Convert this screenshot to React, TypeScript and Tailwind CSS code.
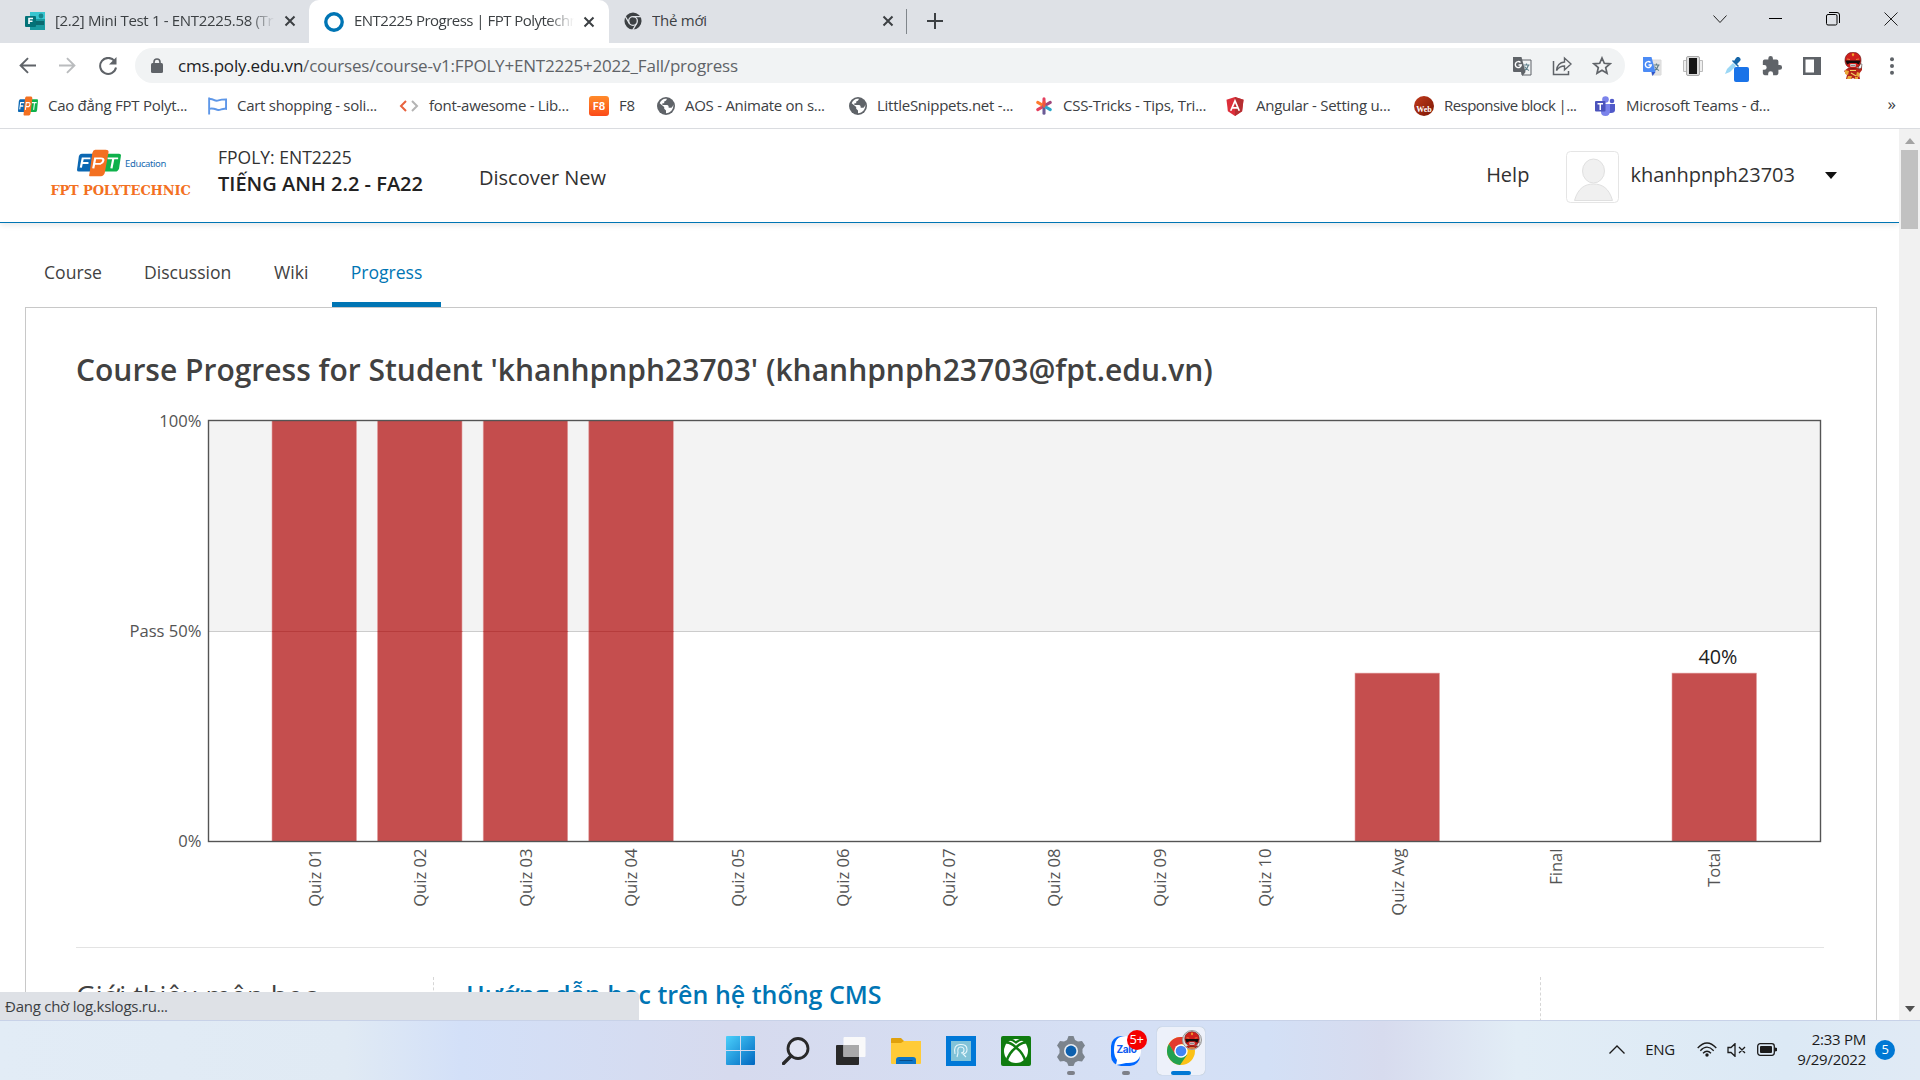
import React from "react";

type IconProps = { className?: string };

const Close = ({ className = "" }: IconProps) => (
  <svg viewBox="0 0 12 12" className={`h-3 w-3 shrink-0 ${className}`}><path d="M1.5 1.5l9 9M10.5 1.5l-9 9" stroke="#3c4043" strokeWidth="2" fill="none" /></svg>
);

const FormsIcon = () => (
  <svg viewBox="0 0 20 20" className="h-5 w-5 shrink-0">
    <rect x="5" y="1" width="15" height="10" fill="#37c6d0" /><circle cx="16" cy="5" r="2.4" fill="#17858c" />
    <rect x="5" y="8" width="15" height="11" fill="#1a9ba1" /><rect x="11" y="10" width="8" height="4" fill="#0b6a70" />
    <rect x="0" y="5" width="11" height="11" rx="1" fill="#037278" />
    <path d="M4 13V7.500h4M4 10.300h3.500" stroke="#fff" strokeWidth="1.600" fill="none" />
  </svg>
);

const ChromeMono = () => (
  <svg viewBox="0 0 20 20" className="h-[18px] w-[18px] shrink-0">
    <circle cx="10" cy="10" r="9.500" fill="#3c4043" />
    <circle cx="10" cy="10" r="4.800" fill="none" stroke="#dee1e6" strokeWidth="1.500" />
    <path d="M10 5.200h9M5.800 12.500L1.300 4.700M14.200 12.500L9.700 20" stroke="#dee1e6" strokeWidth="1.500" />
  </svg>
);

const Globe = () => (
  <svg viewBox="0 0 20 20" className="h-[18px] w-[18px] shrink-0">
    <circle cx="10" cy="10" r="10" fill="#5f6368" />
    <path d="M4 5c2-3 5-3 7-3-.5 2-1 2-3 3v2H6v2h5c2 0 2 2 2 3h3c1.500-1 2-3 2-4 1 5-3 10-8 10v-3l-2-2v-2l-5-4z" fill="#fff" />
  </svg>
);

const FptMark = ({ className = "" }: IconProps) => (
  <svg viewBox="0 0 46 36" preserveAspectRatio="none" className={`shrink-0 ${className}`}>
    <path d="M5 6h13l-3 23H2q-2 0-2-2L2 9q1-3 3-3z" fill="#0b67b2" />
    <path d="M31 6h13q2 0 2 2l-2 17q-1 4-4 4H28z" fill="#0eb14b" />
    <path d="M19 1h11q3 0 3 3l-4 27q-1 4-4 4H14q-2 0-1-3l3-27q1-4 3-4z" fill="#f37021" />
    <g fill="none" stroke="#fff" strokeWidth="2.300"><path d="M4 24l2-12h8M5 18h7" /><path d="M17 25l2-13h6q3 0 2.500 3t-3 4H18" /><path d="M32 12h11M38 12l-2 13" /></g>
  </svg>
);

const Translate = ({ color }: { color: boolean }) => (
  <svg viewBox="0 0 20 20" className="h-5 w-5 shrink-0">
    <path d="M8 4h11v15H10z" fill={color ? "#e3e3e3" : "#f1f3f4"} stroke={color ? "#dadada" : "#5f6368"} />
    <path d="M11.500 9h6M14.500 7.500V9M16.500 9q-1 4-4.500 6M12.500 10.500q2 3 4.500 4" stroke="#5f7f8a" strokeWidth="1.200" fill="none" />
    <path d="M1 1h8.500l4 15H2q-1 0-1-1z" fill={color ? "#4c8bf5" : "#5f6368"} /><path d="M9.500 16h4l-3 4z" fill={color ? "#3156c9" : "#5f6368"} />
    <path d="M8.500 6.500a3 3 0 1 0 .8 2.500H6.500" stroke="#fff" strokeWidth="1.400" fill="none" />
  </svg>
);

const Ranger = ({ className = "" }: IconProps) => (
  <svg viewBox="0 0 20 28" className={`shrink-0 ${className}`}>
    <path d="M5 16h10l4-3v5l-3 4 1 5h-5l-2-1-2 1H3l1-4-3-4z" fill="#b5241a" />
    <path d="M2 18l4 1-1 4-3-1zM14 20l3 1-1 4-3-1zM5 24h4l-1 3H4zM12 25h3v2h-3z" fill="#e9a93a" />
    <path d="M16 11.500l3 .5-.5 4-3 1z" fill="#f5f5f5" stroke="#333" strokeWidth=".5" />
    <path d="M10 .3c5 0 8 3.200 8 8S15 16.500 10 16.500 2 13 2 8.300 5 .3 10 .3z" fill="#d01f1c" stroke="#5a100d" strokeWidth=".6" />
    <path d="M10 .8l1.300 2L10 4.500 8.700 2.800z" fill="#f6a92e" />
    <path d="M2.500 8.500h15l-1.500 4-3-1.500H7L4 12.500z" fill="#120c0c" />
    <path d="M4 7l3 .5M16 7l-3 .5" stroke="#f09a45" strokeWidth=".8" />
    <rect x="7" y="12" width="6" height="2.800" rx="1" fill="#ddd" /><path d="M7.500 13.400h5" stroke="#555" strokeWidth=".7" />
    <path d="M7 18.500h6M8 21l5 3" stroke="#f3cf63" strokeWidth="1.200" />
  </svg>
);

const Tab = ({ icon, title, className, fade }: { icon: React.ReactNode; title: string; className: string; fade: string }) => (
  <div className={`flex h-[42px] items-center ${className}`}>
    {icon}
    <span className={`ml-[10px] flex-1 overflow-hidden whitespace-nowrap pb-[2px] text-[15px] ${fade}`}>{title}</span>
    <Close className="ml-[9px]" />
  </div>
);

const TabStrip = () => (
  <div className="flex h-[43px] bg-[#dee1e6]">
    <Tab className="w-[309px] pl-[25px] pr-[13px]" icon={<FormsIcon />} title="[2.2] Mini Test 1 - ENT2225.58 (Tr" fade="tracking-[-0.32px] [mask-image:linear-gradient(to_right,black_88%,transparent)]" />
    <Tab className="h-[43px] w-[300px] rounded-t-[10px] bg-white pl-[15px] pr-[14px]" icon={<svg viewBox="0 0 20 20" className="h-5 w-5 shrink-0"><circle cx="10" cy="10" r="8.200" fill="none" stroke="#0075b4" strokeWidth="3.400" /></svg>} title="ENT2225 Progress | FPT Polytechn" fade="tracking-[-0.52px] [mask-image:linear-gradient(to_right,black_88%,transparent)]" />
    <Tab className="w-[297px] pl-[15px] pr-[12px]" icon={<ChromeMono />} title="Thẻ mới" fade="tracking-[-0.25px]" />
    <div className="mt-[9px] h-[25px] w-px bg-[#80868b]" />
    <svg viewBox="0 0 16 16" className="ml-[20px] mt-[13px] h-4 w-4"><path d="M8 0v16M0 8h16" stroke="#3c4043" strokeWidth="2" /></svg>
    <div className="ml-auto flex h-[37px] items-center text-black">
      <svg viewBox="0 0 14 10" className="mr-[42px] h-[10px] w-[14px]"><path d="M.5 1.500l6.500 7 6.500-7" fill="none" stroke="#222" /></svg>
      <div className="mr-[44px] h-px w-[13px] bg-black" />
      <svg viewBox="0 0 14 14" className="mr-[44px] h-[14px] w-[14px]"><rect x=".5" y="2.500" width="10.500" height="10.500" rx="1.500" fill="none" stroke="#000" /><path d="M3 .5h8q2.500 0 2.500 2.500v8" fill="none" stroke="#000" /></svg>
      <svg viewBox="0 0 14 14" className="mr-[22px] h-[14px] w-[14px]"><path d="M.5.5l13 13M13.500.5l-13 13" stroke="#222" /></svg>
    </div>
  </div>
);

const Toolbar = () => (
  <div className="flex h-[45px] items-center pl-[19px] pr-[26px]">
    <svg viewBox="0 0 16 16" className="h-[17px] w-[17px]"><path d="M16 8H1.500M8.500 1L1.500 8l7 7" fill="none" stroke="#5f6368" strokeWidth="1.800" /></svg>
    <svg viewBox="0 0 16 16" className="ml-[23px] h-[17px] w-[17px]"><path d="M0 8h14.500M7.500 1l7 7-7 7" fill="none" stroke="#babcbe" strokeWidth="1.800" /></svg>
    <svg viewBox="0 0 18 18" className="ml-[23px] h-[18px] w-[18px]"><path d="M15.500 4A8 8 0 1 0 17 10.500" fill="none" stroke="#5f6368" strokeWidth="2" /><path d="M17.500 0v7.500H10z" fill="#5f6368" /></svg>
    <div className="ml-[18px] flex h-[35px] w-[1490px] items-center rounded-full bg-[#f1f3f4] pl-[16px] pr-[13px]">
      <svg viewBox="0 0 12 15" className="h-[15px] w-[12px]"><rect y="5" width="12" height="10" rx="1.500" fill="#5f6368" /><path d="M3 6V4a3 3 0 0 1 6 0v2" fill="none" stroke="#5f6368" strokeWidth="1.600" /></svg>
      <span className="ml-[15px] whitespace-nowrap text-[17px] tracking-[-0.2px] text-[#5f6368]"><span className="text-[#202124]">cms.poly.edu.vn</span>/courses/course-v1:FPOLY+ENT2225+2022_Fall/progress</span>
      <div className="ml-auto flex items-center gap-[20px]">
        <Translate color={false} />
        <svg viewBox="0 0 20 20" className="h-5 w-5"><path d="M1.500 5v13.500h15V15" fill="none" stroke="#5f6368" strokeWidth="1.500" /><path d="M4.500 14.500c.5-5 3-8 8-8.500V2l6.500 6-6.500 6v-4c-4 0-6 1.500-8 4.500z" fill="none" stroke="#5f6368" strokeWidth="1.400" /></svg>
        <svg viewBox="0 0 20 20" className="h-5 w-5"><path d="M10 2l2.300 5.300 5.700.5-4.300 3.800 1.300 5.600-5-3-5 3 1.300-5.600L2 7.800l5.700-.5z" fill="none" stroke="#5f6368" strokeWidth="1.700" /></svg>
      </div>
    </div>
    <div className="ml-auto flex items-center">
      <Translate color />
      <svg viewBox="0 0 20 20" className="ml-[21px] h-5 w-5"><path d="M.5 4.500h4v11h-4zM15.500 4.500h4v11h-4z" fill="#eee" stroke="#bbb" /><rect x="3.500" y=".5" width="13" height="19" rx="1.500" fill="#ddd" stroke="#aaa" /><rect x="6" y="2" width="8" height="16" fill="#161616" /></svg>
      <svg viewBox="0 0 26 26" className="ml-[21px] mt-[9px] h-[26px] w-[26px]"><path d="M1 17l2-5 6-6 3 3-6 6z" fill="#9bd7f5" /><path d="M8 4l6 6 1-1-2-2 3-3q1.500-2-.5-3.500t-3.500.5l-2 3-1-1z" fill="#1565a8" /><rect x="10" y="10" width="15" height="15" rx="2" fill="#1a73e8" /></svg>
      <svg viewBox="0 0 24 24" className="ml-[11px] h-[22px] w-[22px]"><path d="M20.500 11H19V7a2 2 0 0 0-2-2h-4V3.500a2.500 2.500 0 0 0-5 0V5H4a2 2 0 0 0-2 2v3.800h1.500a2.700 2.700 0 0 1 0 5.400H2V20a2 2 0 0 0 2 2h3.800v-1.500a2.700 2.700 0 0 1 5.400 0V22H17a2 2 0 0 0 2-2v-4h1.500a2.500 2.500 0 0 0 0-5z" fill="#5f6368" /></svg>
      <svg viewBox="0 0 18 18" className="ml-[20px] h-[18px] w-[18px]"><path fillRule="evenodd" d="M0 0h18v18H0zM2.500 2.500v13H11v-13z" fill="#5f6368" /></svg>
      <Ranger className="ml-[22px] h-[28px] w-[20px]" />
      <svg viewBox="0 0 4 18" className="ml-[27px] h-[18px] w-[4px]"><g fill="#5f6368"><circle cx="2" cy="2.200" r="2" /><circle cx="2" cy="9" r="2" /><circle cx="2" cy="15.800" r="2" /></g></svg>
    </div>
  </div>
);

const Mark = ({ icon, label, className }: { icon: React.ReactNode; label: string; className: string }) => (
  <div className={`flex shrink-0 items-center gap-[10px] whitespace-nowrap text-[15px] tracking-[-0.27px] text-[#3c4043] ${className}`}>
    {icon}<span className="pb-[2px]">{label}</span>
  </div>
);

const Bookmarks = () => (
  <div className="flex h-[41px] items-center border-b border-[#dadce0] pb-[4px] pl-[18px]">
    <Mark className="w-[190px]" icon={<FptMark className="h-[20px] w-[20px]" />} label="Cao đẳng FPT Polyt..." />
    <Mark className="w-[191px]" icon={<svg viewBox="0 0 20 18" className="h-[18px] w-[19px]"><path d="M1.200 0v18M1 2c4-2 6 3 10 1 3-1 5-1 8-1v10c-4-1-6 2-9 1s-5-2-9-1" fill="none" stroke="#5e97e8" strokeWidth="2" /></svg>} label="Cart shopping - soli..." />
    <Mark className="w-[190px]" icon={<svg viewBox="0 0 20 12" className="h-[12px] w-[20px]"><path d="M7 1L2 6l5 5" fill="none" stroke="#e8623d" strokeWidth="2" /><path d="M13 1l5 5-5 5" fill="none" stroke="#b4b4b4" strokeWidth="2" /></svg>} label="font-awesome - Lib..." />
    <Mark className="w-[68px]" icon={<div className="flex h-5 w-5 items-center justify-center rounded-[3px] bg-linear-to-b from-[#ff8a2a] to-[#fb4818] font-['Inter'] text-[10px] font-bold text-white">F8</div>} label="F8" />
    <Mark className="w-[192px] tracking-[-0.2px]" icon={<Globe />} label="AOS - Animate on s..." />
    <Mark className="w-[186px]" icon={<Globe />} label="LittleSnippets.net -..." />
    <Mark className="w-[191px]" icon={<svg viewBox="0 0 20 20" className="h-[18px] w-[18px]"><g strokeWidth="3.400" strokeLinecap="round"><path d="M10 10V2M10 10L3 14" stroke="#e4405f" /><path d="M10 10L3 6" stroke="#ff7a2d" /><path d="M10 10l7-4" stroke="#a1477b" /><path d="M10 10v8" stroke="#6b5b95" /><path d="M10 10l7 4" stroke="#2aa7c9" /><path d="M10 10V6" stroke="#f2543d" /></g></svg>} label="CSS-Tricks - Tips, Tri..." />
    <Mark className="w-[188px]" icon={<svg viewBox="0 0 18 20" className="mr-[2px] h-[19px] w-[18px]"><path d="M9 0l9 3-1.500 12L9 20l-7.500-5L0 3z" fill="#dd2e3a" /><path d="M9 0l9 3-1.500 12L9 20z" fill="#b52e31" /><path d="M4.500 14.500L9 4l4.500 10.500M6 11.500h6" stroke="#fff" strokeWidth="1.800" fill="none" /></svg>} label="Angular - Setting u..." />
    <Mark className="w-[181px] tracking-[-0.55px]" icon={<div className="flex h-5 w-5 items-center justify-center overflow-hidden rounded-full bg-linear-to-br from-[#c23a1b] to-[#7b1606] pt-2 font-['Liberation_Serif'] text-[8px] font-bold tracking-normal text-white">Web</div>} label="Responsive block |..." />
    <Mark className="" icon={<svg viewBox="0 0 20 20" className="mr-px h-5 w-5"><circle cx="10.500" cy="3.500" r="3.300" fill="#7b83eb" /><circle cx="17" cy="5" r="2.300" fill="#5059c9" /><path d="M13 8h7v6q0 3-4 3h-3z" fill="#5059c9" /><path d="M6 8h9v7q0 5-4.500 5T6 16z" fill="#7b83eb" /><rect y="5" width="10.500" height="10.500" rx="1" fill="#4b53bc" /><path d="M2.500 7.800H8M5.250 8v6" stroke="#fff" strokeWidth="1.500" /></svg>} label="Microsoft Teams - đ..." />
    <span className="ml-auto mr-[24px] pb-[5px] text-[17px] text-[#3c4043]">»</span>
  </div>
);

const SiteHeader = () => (
  <div className="flex h-[94px] items-start border-b border-[#0075b4] pl-[50px] pr-[62px] text-[#313131] shadow-[0_2px_6px_rgba(0,0,0,0.1)]">
    <div className="flex w-[141px] flex-col items-center pt-[20px]">
      <div className="flex items-center pl-[2px]">
        <FptMark className="h-[28px] w-[44px]" />
        <span className="ml-[4px] mt-[2px] font-['Noto_Sans'] text-[9.5px] tracking-[-0.4px] text-[#1a6bb0]">Education</span>
      </div>
      <span className="mt-[6px] whitespace-nowrap font-['DejaVu_Serif','Liberation_Serif'] text-[13px] font-bold leading-4 tracking-[-0.15px] text-[#f37021]">FPT POLYTECHNIC</span>
    </div>
    <div className="ml-[27px] pt-[15px]">
      <div className="text-[17.5px] leading-[26px]">FPOLY: ENT2225</div>
      <div className="whitespace-nowrap text-[20px] font-semibold leading-[27px] text-[#222]">TIẾNG ANH 2.2 - FA22</div>
    </div>
    <div className="ml-[56px] pt-[34px] text-[20px] leading-[30px]">Discover New</div>
    <div className="ml-auto flex items-start text-[20px] leading-[30px]">
      <span className="pt-[31px]">Help</span>
      <svg viewBox="0 0 53 52" className="ml-[37px] mt-[22px] h-[52px] w-[53px]"><rect x=".5" y=".5" width="52" height="51" rx="4" fill="#fff" stroke="#e5e5e5" /><ellipse cx="27.500" cy="20" rx="11" ry="12" fill="#f0f0f0" stroke="#e0e0e0" /><path d="M8.500 49.500C12 37 19 33 27.500 33S43 37 46.500 49.500z" fill="#f0f0f0" stroke="#e0e0e0" /></svg>
      <span className="ml-[11px] pt-[31px]">khanhpnph23703</span>
      <svg viewBox="0 0 12 7" className="ml-[30px] mt-[43px] h-[7px] w-[12px]"><path d="M0 0h12L6 7z" fill="#111" /></svg>
    </div>
  </div>
);

const NavTabs = () => (
  <div className="flex h-[84px] items-end pl-[25px] text-[17.6px] leading-[27px] text-[#414141]">
    <div className="h-[48px] w-[96px] pl-[19px]">Course</div>
    <div className="h-[48px] w-[129px] pl-[23px]">Discussion</div>
    <div className="h-[48px] w-[82px] pl-[24px]">Wiki</div>
    <div className="h-[48px] w-[109px] border-b-5 border-[#0075b4] text-center text-[#0075b4]">Progress</div>
  </div>
);

const labels: [string, number, number, number][] = [
  ["Quiz 01", 315, 272, 100], ["Quiz 02", 420.500, 377.500, 100], ["Quiz 03", 526, 483.200, 100], ["Quiz 04", 631.500, 588.800, 100],
  ["Quiz 05", 738, 0, 0], ["Quiz 06", 843, 0, 0], ["Quiz 07", 949, 0, 0], ["Quiz 08", 1054, 0, 0], ["Quiz 09", 1160, 0, 0], ["Quiz 10", 1265.500, 0, 0],
  ["Quiz Avg", 1398, 1355, 40], ["Final", 1556, 0, 0], ["Total", 1714, 1672, 40],
];

const Chart = () => (
  <svg viewBox="76 404 1748 544" className="h-[544px] w-[1748px] font-['Open_Sans']">
    <rect x="208.500" y="420.500" width="1612" height="211" fill="#f3f3f3" />
    <path d="M208.500 631.500h1612" stroke="#ccc" />
    {labels.filter((l) => l[3] > 0).map(([name, , x, value]) => (
      <rect key={name} x={x} y={841.5 - value * 4.21} width="84.500" height={value * 4.21} fill="#bd3536" fillOpacity=".88" stroke="#e3a1a1" strokeWidth=".6" />
    ))}
    <path d="M272 631.500h85M377.500 631.500h85M483.200 631.500h85M588.800 631.500h85" stroke="#b03636" strokeOpacity=".6" />
    <rect x="208.500" y="420.500" width="1612" height="421" fill="none" stroke="#545454" strokeWidth="1.400" />
    <g fontSize="16.6" fill="#545454" textAnchor="end"><text x="201.500" y="427">100%</text><text x="201.500" y="637">Pass 50%</text><text x="201.500" y="847">0%</text></g>
    <text x="1718" y="663.500" fontSize="19.800" fill="#222" textAnchor="middle">40%</text>
    <g fontSize="16.6" fill="#545454" textAnchor="end">
      {labels.map(([name, x]) => <text key={name} transform={`translate(${x + 5.5} 848.5) rotate(-90)`}>{name}</text>)}
    </g>
  </svg>
);

const CoursePage = () => (
  <div className="flex h-[891px]">
    <div className="w-[1899px] overflow-hidden bg-white">
      <SiteHeader />
      <NavTabs />
      <div className="ml-[25px] h-[730px] w-[1852px] border border-[#c8c8c8] pl-[50px]">
        <h1 className="h-[96px] whitespace-nowrap pt-[38px] text-[30px] font-semibold leading-[48px] text-[#414141]">Course Progress for Student 'khanhpnph23703' (khanhpnph23703@fpt.edu.vn)</h1>
        <Chart />
        <div className="-mt-px flex h-[76px] w-[1748px] items-start border-t border-[#e3e3e3] pt-[29px]">
          <h2 className="h-[60px] w-[358px] whitespace-nowrap border-r border-dashed border-[#d6d6d6] text-[27.2px] leading-[38px] text-[#414141]">Giới thiệu môn học</h2>
          <div className="h-[60px] w-[1107px] border-r border-dashed border-[#d6d6d6] pl-[32px] text-[25px] font-semibold leading-[35px] text-[#0075b4]">Hướng dẫn học trên hệ thống CMS</div>
        </div>
      </div>
    </div>
    <div className="flex w-[21px] flex-col items-center bg-[#f1f1f1] pb-[8px] pt-[9px]">
      <svg viewBox="0 0 10 6" className="h-[6px] w-[10px]"><path d="M0 6h10L5 0z" fill="#a3a3a3" /></svg>
      <div className="mt-[6px] h-[79px] w-[17px] bg-[#c1c1c1]" />
      <svg viewBox="0 0 10 6" className="mt-auto h-[6px] w-[10px]"><path d="M0 0h10L5 6z" fill="#505050" /></svg>
    </div>
  </div>
);

const TaskbarApp = ({ children, dot = false }: { children: React.ReactNode; dot?: boolean }) => (
  <div className="relative flex h-12 w-[55px] items-center justify-center">
    {children}
    {dot && <div className="absolute bottom-0 left-[24px] h-[4px] w-[8px] rounded-full bg-[#7d8088]" />}
  </div>
);

const Taskbar = () => (
  <div className="flex h-[60px] items-center border-t border-[#c8d2e8] bg-[linear-gradient(90deg,#e2ecf6_0%,#e0eaf4_18%,#d3e0f8_24%,#d6daee_38%,#d5e0f5_60%,#d3e0f6_66%,#d7dbee_72%,#e2edf6_79%,#dce9f5_93%,#e0eaf5_100%)]">
    <div className="ml-[713px] flex">
      <TaskbarApp><svg viewBox="0 0 30 30" className="h-[29px] w-[29px]"><defs><linearGradient id="win" x2="1" y2="1"><stop stopColor="#4bd0fb" /><stop offset="1" stopColor="#0067c0" /></linearGradient></defs><path d="M0 1q0-1 1-1h13.500v14.500H0zM15.500 0H29q1 0 1 1v13.500H15.500zM0 15.500h14.500V30H1q-1 0-1-1zM15.500 15.500H30V29q0 1-1 1H15.500z" fill="url(#win)" /></svg></TaskbarApp>
      <TaskbarApp><svg viewBox="0 0 28 28" className="h-[28px] w-[28px]"><circle cx="16" cy="11.500" r="10" fill="#e8eaf3" fillOpacity=".6" stroke="#292929" strokeWidth="2.800" /><path d="M9 19l-7.500 7.500" stroke="#292929" strokeWidth="3.400" strokeLinecap="round" /></svg></TaskbarApp>
      <TaskbarApp><svg viewBox="0 0 30 28" className="h-[28px] w-[30px]"><rect y="8" width="23" height="20" rx="1" fill="#292929" /><rect x="7.500" y="0" width="22" height="20" rx="1" fill="#f9f9fa" /><path d="M7.500 8H23v12H7.500z" fill="#a9a9aa" /></svg></TaskbarApp>
      <TaskbarApp><svg viewBox="0 0 30 26" className="h-[26px] w-[30px]"><path d="M0 1q0-1 1-1h9l3 3h16q1 0 1 1v6H0z" fill="#e0a10d" /><path d="M0 5h10l3-2h17v22q0 1-1 1H1q-1 0-1-1z" fill="#ffcb38" /><path d="M5 26v-4q0-3 3-3h14q3 0 3 3v4z" fill="#0c75c7" /><path d="M8.500 22.500h13" stroke="#094b84" /></svg></TaskbarApp>
      <TaskbarApp><svg viewBox="0 0 30 30" className="h-[30px] w-[30px]"><path d="M0 0h30v30H0z" fill="#0078d7" /><path d="M5 5h20v20H5z" fill="#82c3d8" /><path d="M9 18q-2-9 5-9.500t7 5q0 4-4 4.500l3 3M12 17q-1-6 2.500-6t3.500 3-3 3M12 17l-1 4" fill="none" stroke="#e6f6fb" strokeWidth="1.100" /></svg></TaskbarApp>
      <TaskbarApp><svg viewBox="0 0 30 30" className="h-[30px] w-[30px]"><rect width="30" height="30" rx="2" fill="#107c10" /><circle cx="15" cy="15" r="12" fill="#fff" /><path d="M8.500 3.500q3 0 6.500 3 3.500-3 6.500-3" fill="none" stroke="#107c10" strokeWidth="2.200" /><path d="M5.500 6.500C9 6.500 12.500 9 15 11.500 17.500 9 21 6.500 24.500 6.500M5.500 25.500C7 20 11 14.500 15 11.500c4 3 8 8.500 9.500 14" fill="none" stroke="#107c10" strokeWidth="2.500" /></svg></TaskbarApp>
      <TaskbarApp dot><svg viewBox="0 0 30 30" className="h-[30px] w-[30px]"><path d="M11 4l1.500-4h5L19 4l3 1.500 4-.5 3 4.500-2.500 3.500v4L29 21l-3 4.500-4-.5-3 1.500L17.500 30h-5L11 26.500 8 25l-4 .5L1 21l2.500-4v-4L1 9.500 4 5l4 .5z" fill="#7c848d" /><circle cx="15" cy="15" r="7" fill="#e9edf3" /><circle cx="15" cy="15" r="5.400" fill="#0d60ae" /></svg></TaskbarApp>
      <TaskbarApp dot>
        <div className="relative h-[30px] w-[30px]"><svg viewBox="0 0 30 30" className="h-full w-full"><rect width="29" height="30" rx="10" fill="#0068ff" /><path d="M3 14C3 4 7 0 15 0q15 0 15 14t-15 13q-4 1-10 2l1-5q-3-4-3-10z" fill="#fff" /></svg>
          <span className="absolute left-[6px] top-[7px] font-['Inter'] text-[10px] font-bold leading-3 tracking-[-0.3px] text-[#0d5bf0]">Zalo</span>
          <span className="absolute -top-[6px] left-[16px] flex h-[20px] w-[20px] items-center justify-center rounded-full bg-[#f50000] text-[13px] tracking-[-0.5px] text-white">5+</span>
        </div>
      </TaskbarApp>
      <div className="relative ml-[4px] flex h-12 w-12 items-center justify-center rounded-[5px] bg-[#edf1fa] shadow-[0_0_1px_#9aa]">
        <svg viewBox="0 0 30 30" className="-ml-px h-[28px] w-[28px]"><circle cx="15" cy="15" r="15" fill="#fbc116" /><path d="M2 7.500A15 15 0 0 1 28 7.500H15L8.500 18.700z" fill="#e33b2e" /><path d="M2 7.500A15 15 0 0 0 14 30l7.500-11-13-1z" fill="#21a150" /><circle cx="15" cy="15" r="7.200" fill="#fff" /><circle cx="15" cy="15" r="5.700" fill="#4285f4" /></svg>
        <div className="absolute right-[3px] top-[3px] h-5 w-5 overflow-hidden rounded-full border border-[#999] bg-[#ddd]"><Ranger className="mx-auto h-[26px] w-[18px]" /></div>
        <div className="absolute bottom-0 h-[4px] w-5 rounded-full bg-[#0078d4]" />
      </div>
    </div>
    <div className="-mt-[2px] ml-auto flex items-center pr-[25px] text-[15px] tracking-[-0.25px] text-[#1b1b1b]">
      <svg viewBox="0 0 16 9" className="h-[9px] w-[16px]"><path d="M.5 8.500L8 1l7.500 7.500" fill="none" stroke="#1b1b1b" strokeWidth="1.300" /></svg>
      <span className="ml-[20px]">ENG</span>
      <svg viewBox="0 0 20 15" className="ml-[22px] h-[15px] w-[20px]"><g fill="none" stroke="#1b1b1b" strokeWidth="1.300"><path d="M.7 6q9.300-10 18.600 0M3.300 8.700q6.700-7 13.400 0M6 11.300q4-4 8 0" /></g><circle cx="10" cy="13" r="1.700" fill="#1b1b1b" /></svg>
      <svg viewBox="0 0 20 14" className="ml-[10px] h-[14px] w-[20px]"><path d="M1 4.500v5h3l4 3.800V.7l-4 3.800zM12 4l6 6M18 4l-6 6" fill="none" stroke="#1b1b1b" strokeWidth="1.300" /></svg>
      <svg viewBox="0 0 20 13" className="ml-[10px] h-[13px] w-[20px]"><rect x=".7" y=".7" width="16.600" height="11.600" rx="2.500" fill="none" stroke="#1b1b1b" strokeWidth="1.300" /><rect x="3" y="3" width="12" height="7" rx="1" fill="#1b1b1b" /><path d="M18 4.500l2 .5v3l-2 .5z" fill="#1b1b1b" /></svg>
      <div className="-mt-[2px] ml-[18px] w-[71px] text-right leading-[20px]"><div>2:33 PM</div><div>9/29/2022</div></div>
      <div className="ml-[9px] mt-px flex h-5 w-5 items-center justify-center rounded-full bg-[#0078d4] text-[13px] text-white">5</div>
    </div>
  </div>
);

export default function App() {
  return (
    <div className="relative h-[1080px] w-[1920px] overflow-hidden bg-white font-['Open_Sans',sans-serif] text-[#3c4043]">
      <TabStrip />
      <Toolbar />
      <Bookmarks />
      <CoursePage />
      <Taskbar />
      <div className="absolute left-0 top-[992px] flex h-[28px] w-[639px] items-center rounded-tr-[4px] bg-[#dee1e6] pl-[5px] pt-px text-[15px] tracking-[-0.25px] text-[#3c4043]">Đang chờ log.kslogs.ru...</div>
    </div>
  );
}
